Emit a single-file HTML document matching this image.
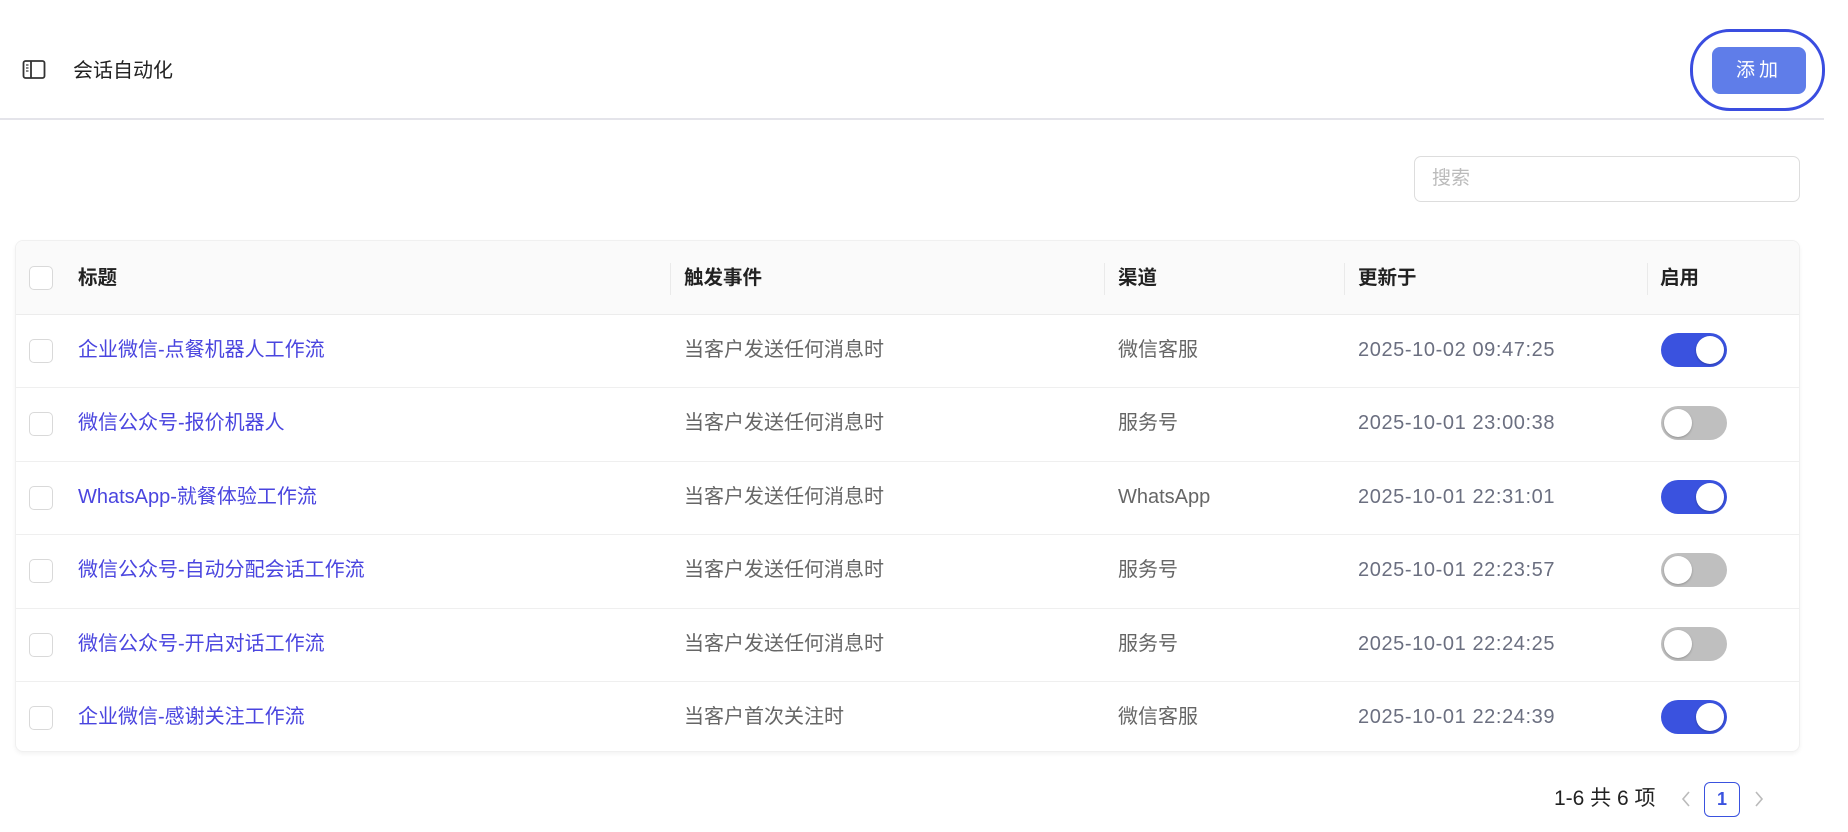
<!DOCTYPE html>
<html><head><meta charset="utf-8"><style>
*{box-sizing:border-box;margin:0;padding:0}
body{width:1848px;height:832px;background:#fff;font-family:"Liberation Sans","Noto Sans CJK SC",sans-serif;position:relative;overflow:hidden;color:#222}
.abs{position:absolute}
.hline{left:0;top:118px;width:1824px;height:2px;background:#e4e4ea}
.title{left:73px;top:58px;font-size:20px;color:#222;line-height:26px}
.ring{left:1690px;top:29px;width:135px;height:82px;border:3px solid #3a4de0;border-radius:40px}
.btn{left:1712px;top:47px;width:94px;height:47px;background:#5f7de9;border-radius:8px;color:#fff;font-size:19px;text-align:center;line-height:47px;letter-spacing:4px}
.search{left:1414px;top:156px;width:386px;height:46px;border:1.5px solid #ddd;border-radius:7px;color:#bbb;font-size:19px;line-height:43px;padding-left:17px}
.table{left:15px;top:240px;width:1785px;height:512px;border:1px solid #f0f0f0;border-radius:8px;box-shadow:0 2px 4px rgba(0,0,0,.05);overflow:hidden}
.th{position:absolute;left:0;top:0;width:100%;height:74px;background:#fafafa;border-bottom:1px solid #ececec}
.row{position:absolute;left:0;width:100%;height:73.4px;border-bottom:1px solid #efefef}
.cb{position:absolute;left:13px;width:24px;height:24px;border:1.5px solid #d9d9d9;border-radius:5px;background:#fff}
.cell{position:absolute;font-size:20px;line-height:26px;white-space:nowrap}
.h{font-weight:bold;color:#222;font-size:19.5px}
.sep{position:absolute;top:22px;width:1px;height:32px;background:#eaeaea}
.link{color:#4a45df}
.g{color:#666}
.d{color:#6b6f80;letter-spacing:.6px}
.tg{position:absolute;left:1645px;width:66px;height:34px;border-radius:17px}
.tg.on{background:#3a52df}
.tg.off{background:#bfbfbf}
.tg::after{content:"";position:absolute;top:3px;width:28px;height:28px;border-radius:50%;background:#fff;box-shadow:0 1px 2px rgba(0,0,0,.25)}
.tg.on::after{right:3px}
.tg.off::after{left:3px}
</style></head><body>
<svg class="abs" style="left:22px;top:59px" width="24" height="22" viewBox="0 0 24 22"><rect x="1.5" y="2" width="21" height="17" rx="2" fill="none" stroke="#333" stroke-width="1.8"/><line x1="9" y1="2" x2="9" y2="19" stroke="#333" stroke-width="1.8"/><line x1="4" y1="6" x2="6.5" y2="6" stroke="#333" stroke-width="1.2"/><line x1="4" y1="9" x2="6.5" y2="9" stroke="#333" stroke-width="1.2"/><line x1="4" y1="12" x2="6.5" y2="12" stroke="#333" stroke-width="1.2"/></svg>
<div class="abs title">会话自动化</div>
<div class="abs ring"></div>
<div class="abs btn">添加</div>
<div class="abs hline"></div>
<div class="abs search">搜索</div>
<div class="abs table">
 <div class="th">
  <div class="cb" style="top:25px"></div>
  <div class="cell h" style="left:62px;top:24px">标题</div>
  <div class="sep" style="left:654px"></div>
  <div class="cell h" style="left:668px;top:24px">触发事件</div>
  <div class="sep" style="left:1088px"></div>
  <div class="cell h" style="left:1102px;top:24px">渠道</div>
  <div class="sep" style="left:1328px"></div>
  <div class="cell h" style="left:1342px;top:24px">更新于</div>
  <div class="sep" style="left:1631px"></div>
  <div class="cell h" style="left:1644px;top:24px">启用</div>
 </div>
 <div class="row" style="top:74px"><div class="cb" style="top:24px"></div><div class="cell link" style="left:62px;top:22px">企业微信-点餐机器人工作流</div><div class="cell g" style="left:668px;top:22px">当客户发送任何消息时</div><div class="cell g" style="left:1102px;top:22px">微信客服</div><div class="cell d" style="left:1342px;top:22px">2025-10-02 09:47:25</div><div class="tg on" style="top:18px"></div></div>
 <div class="row" style="top:147.4px"><div class="cb" style="top:24px"></div><div class="cell link" style="left:62px;top:22px">微信公众号-报价机器人</div><div class="cell g" style="left:668px;top:22px">当客户发送任何消息时</div><div class="cell g" style="left:1102px;top:22px">服务号</div><div class="cell d" style="left:1342px;top:22px">2025-10-01 23:00:38</div><div class="tg off" style="top:18px"></div></div>
 <div class="row" style="top:220.8px"><div class="cb" style="top:24px"></div><div class="cell link" style="left:62px;top:22px">WhatsApp-就餐体验工作流</div><div class="cell g" style="left:668px;top:22px">当客户发送任何消息时</div><div class="cell g" style="left:1102px;top:22px">WhatsApp</div><div class="cell d" style="left:1342px;top:22px">2025-10-01 22:31:01</div><div class="tg on" style="top:18px"></div></div>
 <div class="row" style="top:294.2px"><div class="cb" style="top:24px"></div><div class="cell link" style="left:62px;top:22px">微信公众号-自动分配会话工作流</div><div class="cell g" style="left:668px;top:22px">当客户发送任何消息时</div><div class="cell g" style="left:1102px;top:22px">服务号</div><div class="cell d" style="left:1342px;top:22px">2025-10-01 22:23:57</div><div class="tg off" style="top:18px"></div></div>
 <div class="row" style="top:367.6px"><div class="cb" style="top:24px"></div><div class="cell link" style="left:62px;top:22px">微信公众号-开启对话工作流</div><div class="cell g" style="left:668px;top:22px">当客户发送任何消息时</div><div class="cell g" style="left:1102px;top:22px">服务号</div><div class="cell d" style="left:1342px;top:22px">2025-10-01 22:24:25</div><div class="tg off" style="top:18px"></div></div>
 <div class="row" style="top:441px;border-bottom:none"><div class="cb" style="top:24px"></div><div class="cell link" style="left:62px;top:22px">企业微信-感谢关注工作流</div><div class="cell g" style="left:668px;top:22px">当客户首次关注时</div><div class="cell g" style="left:1102px;top:22px">微信客服</div><div class="cell d" style="left:1342px;top:22px">2025-10-01 22:24:39</div><div class="tg on" style="top:18px"></div></div>
</div>
<div class="abs" style="left:1554px;top:785px;font-size:21px;color:#222;line-height:28px">1-6 共 6 项</div>
<svg class="abs" style="left:1679px;top:789px" width="14" height="20" viewBox="0 0 14 20"><path d="M10 3 L4 10 L10 17" fill="none" stroke="#bbb" stroke-width="1.6"/></svg>
<div class="abs" style="left:1704px;top:782px;width:36px;height:35px;border:1.8px solid #3a52df;border-radius:6px;color:#3a52df;font-weight:bold;font-size:18px;text-align:center;line-height:32px">1</div>
<svg class="abs" style="left:1752px;top:789px" width="14" height="20" viewBox="0 0 14 20"><path d="M4 3 L10 10 L4 17" fill="none" stroke="#bbb" stroke-width="1.6"/></svg>
</body></html>
